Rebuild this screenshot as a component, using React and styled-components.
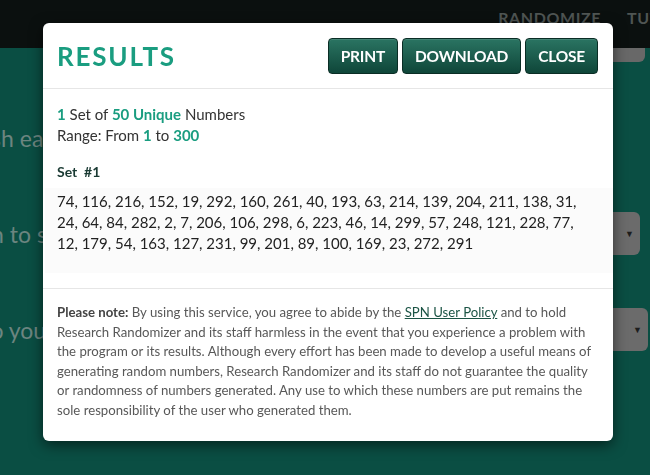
import styled, { createGlobalStyle } from 'styled-components';

const GlobalStyle = createGlobalStyle`
  html, body {
    margin: 0;
    padding: 0;
    height: 100%;
    overflow: hidden;
  }
  body {
    background: #0a4e43;
    font-family: Lato, "Open Sans", "Liberation Sans", sans-serif;
  }
`;

const numbers = [74, 116, 216, 152, 19, 292, 160, 261, 40, 193, 63, 214, 139, 204, 211, 138, 31,
  24, 64, 84, 282, 2, 7, 206, 106, 298, 6, 223, 46, 14, 299, 57, 248, 121, 228, 77,
  12, 179, 54, 163, 127, 231, 99, 201, 89, 100, 169, 23, 272, 291];

const App = () => {
    return (
        <>
            <GlobalStyle />
            <Page>
                <TopBar>
                    <NavLink>RANDOMIZE</NavLink>
                    <NavLink>TUTORIAL</NavLink>
                </TopBar>
                <Main>
                    <Strip />
                    <Row>
                        <Label shift={111}>Do you wish each number in a set to remain unique?</Label>
                    </Row>
                    <Row>
                        <Label shift={121}>Do you wish to sort the numbers that are generated?</Label>
                        <Select inset={10}><Arrow>▼</Arrow></Select>
                    </Row>
                    <Row>
                        <Label shift={76}>How do you wish to view your random numbers?</Label>
                        <Select inset={2}><Arrow>▼</Arrow></Select>
                    </Row>
                </Main>
            </Page>

            <Overlay>
                <Modal>
                    <ModalHeader>
                        <Title>RESULTS</Title>
                        <Actions>
                            <ActionButton>PRINT</ActionButton>
                            <ActionButton>DOWNLOAD</ActionButton>
                            <ActionButton>CLOSE</ActionButton>
                        </Actions>
                    </ModalHeader>
                    <ModalBody>
                        <Summary>
                            <Hi>1</Hi> Set of <Hi>50 Unique</Hi> Numbers
                            <br />
                            Range: From <Hi>1</Hi> to <Hi>300</Hi>
                        </Summary>
                        <SetTitle>Set&nbsp; #1</SetTitle>
                        <NumberBox>{numbers.join(', ')}</NumberBox>
                    </ModalBody>
                    <ModalFooter>
                        <strong>Please note:</strong> By using this service, you agree to abide by the{' '}
                        <PolicyLink href="#">SPN User Policy</PolicyLink> and to hold Research Randomizer and
                        its staff harmless in the event that you experience a problem with the program or its
                        results. Although every effort has been made to develop a useful means of generating
                        random numbers, Research Randomizer and its staff do not guarantee the quality or
                        randomness of numbers generated. Any use to which these numbers are put remains the
                        sole responsibility of the user who generated them.
                    </ModalFooter>
                </Modal>
            </Overlay>
        </>
    );
};

export default App;

const Page = styled.div`
  width: 650px;
  height: 475px;
  overflow: hidden;
`;

const TopBar = styled.div`
  height: 48px;
  background: #0b100f;
  display: flex;
  justify-content: flex-end;
  gap: 26px;
  margin-right: -60px;
`;

const NavLink = styled.div`
  padding-top: 8px;
  line-height: 20px;
  font-size: 16px;
  font-weight: 700;
  letter-spacing: 0.6px;
  color: #4f5553;
`;

const Main = styled.div`
  display: flex;
  flex-direction: column;
`;

const Strip = styled.div`
  align-self: flex-end;
  width: 220px;
  height: 14px;
  margin-right: 5px;
  margin-bottom: 54px;
  background: #686868;
  border-radius: 0 0 6px 6px;
`;

const Row = styled.div`
  display: flex;
  align-items: center;
  height: 43px;
  margin-bottom: 53px;
`;

const Label = styled.div`
  flex: 1;
  margin-left: -${(props) => props.shift}px;
  white-space: nowrap;
  overflow: hidden;
  font-size: 23px;
  color: #6c8580;
`;

const Select = styled.div`
  width: 180px;
  height: 43px;
  margin-right: ${(props) => props.inset}px;
  background: #6b6b6b;
  border-radius: 6px;
  display: flex;
  align-items: center;
  justify-content: flex-end;
  padding-right: 6px;
  box-sizing: border-box;
`;

const Arrow = styled.span`
  font-size: 9px;
  color: #1d1d1d;
`;

const Overlay = styled.div`
  position: fixed;
  inset: 0;
  padding: 23px 0 0 43px;
`;

const Modal = styled.div`
  width: 570px;
  background: #ffffff;
  border-radius: 6px;
  box-shadow: 0 4px 14px rgba(0, 0, 0, 0.55);
  overflow: hidden;
`;

const ModalHeader = styled.div`
  display: flex;
  justify-content: space-between;
  align-items: center;
  padding: 15px 15px 14px 14px;
  border-bottom: 1px solid #e6e6e6;
`;

const Title = styled.h1`
  margin: 0;
  font-size: 26px;
  font-weight: 700;
  letter-spacing: 1.8px;
  color: #1a9d80;
`;

const Actions = styled.div`
  display: flex;
  gap: 4px;
`;

const ActionButton = styled.button`
  height: 36px;
  padding: 0 12px;
  font-family: Lato, "Liberation Sans", sans-serif;
  font-size: 15.5px;
  font-weight: 700;
  letter-spacing: -0.2px;
  color: #ffffff;
  background: linear-gradient(to bottom, #2a7462, #0f4639);
  border: 1px solid #0a2d25;
  border-radius: 4px;
  box-shadow: inset 0 1px 0 rgba(255, 255, 255, 0.12);
  cursor: pointer;
`;

const ModalBody = styled.div`
  padding: 15px 15px 15px 14px;
  border-bottom: 1px solid #e6e6e6;
`;

const Summary = styled.div`
  font-size: 15px;
  line-height: 21px;
  color: #333333;
`;

const Hi = styled.span`
  font-weight: 700;
  color: #1a9d80;
`;

const SetTitle = styled.div`
  margin-top: 16px;
  font-size: 14px;
  line-height: 20px;
  font-weight: 700;
  color: #1a3a33;
`;

const NumberBox = styled.div`
  margin: 6px -15px 0 -12px;
  padding: 3px 30px 19px 12px;
  background: #fbfbfb;
  font-size: 15px;
  line-height: 21px;
  color: #222222;
`;

const ModalFooter = styled.div`
  padding: 14px 13px 21px 14px;
  font-size: 13.2px;
  line-height: 19.5px;
  color: #585858;

  strong {
    color: #444444;
  }
`;

const PolicyLink = styled.a`
  color: #1c5445;
  text-decoration: underline;
`;
